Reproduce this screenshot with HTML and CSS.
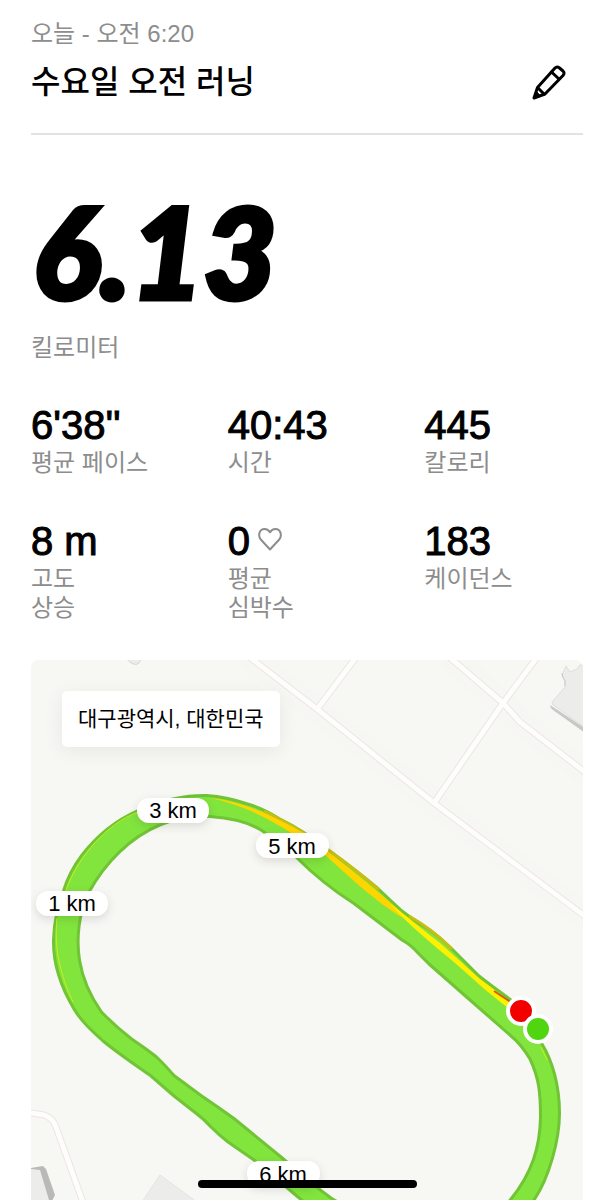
FILE: index.html
```html
<!DOCTYPE html>
<html lang="ko">
<head>
  <meta charset="UTF-8" />
  <meta name="viewport" content="width=device-width, initial-scale=1.0">
  <title>수요일 오전 러닝</title>
  <link rel="stylesheet" href="styles.css">
</head>
<body>

  <main class="page">
    <header class="header">
      <div class="date">오늘 - 오전 6:20</div>
      <div class="title-row">
        <h1 class="title">수요일 오전 러닝</h1>
        <button class="edit" type="button" aria-label="이름 편집">
          <svg width="36" height="36" viewBox="0 0 36 36" fill="none" stroke="#000" stroke-width="3" stroke-linejoin="round" stroke-linecap="round">
            <path d="M3 34 L6.500 23.500 L24 4 Q26 2 28.500 4 L32 7 Q34 9 32 11.500 L14 30 Z" />
            <path d="M20.500 8 L28 15 M7 24 L13 30" />
            <path d="M3 34 L5 27 L9.500 32 Z" fill="#000" stroke-width="1" />
          </svg>
        </button>
      </div>
    </header>

    <section class="distance">
      <div class="distance-value">6.13</div>
      <div class="label">킬로미터</div>
    </section>

    <section class="stats">
      <div class="stat">
        <div class="value">6'38''</div>
        <div class="label">평균 페이스</div>
      </div>
      <div class="stat">
        <div class="value">40:43</div>
        <div class="label">시간</div>
      </div>
      <div class="stat">
        <div class="value">445</div>
        <div class="label">칼로리</div>
      </div>
      <div class="stat">
        <div class="value">8 m</div>
        <div class="label">고도<br>상승</div>
      </div>
      <div class="stat">
        <div class="value">0
          <svg class="heart" width="24" height="28" viewBox="0 0 24 28" fill="none" stroke="#8d8d8d" stroke-width="2" stroke-linejoin="round">
            <path d="M12 22.500 L3 12.800 C-0.500 8.800 1.300 2 6.500 2 C9.500 2 11.300 4 12 5.300 C12.700 4 14.500 2 17.500 2 C22.700 2 24.500 8.800 21 12.800 Z" />
          </svg>
        </div>
        <div class="label">평균<br>심박수</div>
      </div>
      <div class="stat">
        <div class="value">183</div>
        <div class="label">케이던스</div>
      </div>
    </section>

    <section class="map">
      <svg class="map-canvas" viewBox="31 660 552 540" role="img" aria-label="러닝 경로">
        <!-- roads: edge first, then surface -->
        <g class="road-shade">
          <path d="M248 656 L434 803 L590 920" />
          <path d="M448 656 L503 703 L520 722 L590 776" />
        </g>
        <g class="road-edge">
          <path d="M248 656 L317 709 L434 803 L590 920" />
          <path d="M357 656 L318 708" />
          <path d="M448 656 L503 703 L520 722 L590 776" />
          <path d="M538 656 L503 703 L434 803" />
          <path d="M25 1112 L44 1115 Q53 1118 56 1127 L84 1205" />
        </g>
        <g class="road">
          <path d="M248 656 L317 709 L434 803 L590 920" />
          <path d="M357 656 L318 708" />
          <path d="M448 656 L503 703 L520 722 L590 776" />
          <path d="M538 656 L503 703 L434 803" />
          <path d="M25 1112 L44 1115 Q53 1118 56 1127 L84 1205" />
        </g>

        <!-- buildings -->
        <path fill="#c8c8c6" d="M550 705 Q550 708 553 710 L585 733 V728 Z" />
        <path fill="#ececeb" stroke="#dedede" d="M566 666 L570 672 L577 669 L580 665 H590 V731 L553 705 Q551 703 553 701 L565 687 V681 L562 675 Z" />
        <path fill="none" stroke="#c8c8c6" d="M562 673 Q562 677 565 681 V686" />
        <path fill="#ececeb" stroke="#d6d6d4" d="M126 658 Q132 666 138 664 L142 658 Z" />
        <path fill="#b9b9b7" d="M31 1168 L43 1166 L46 1169 L55 1195 L50 1205 H31 Z" />
        <path fill="#ececeb" d="M31 1169 L40 1170 L49 1200 H31 Z" />
        <path fill="#ececeb" stroke="#e4e4e2" d="M140 1205 L160 1175 L201 1205 Z" />

        <!-- track -->
        <path class="track" fill-rule="evenodd" d="M207 795.500
          C186 795 160 800 138 810.500 C114 821 95 838 82 855 C73 867 67 879 63.500 891
          C57 907 54 923 53.500 940 C53 965 62 989 74 1009
          C81 1021 92 1031 103 1041 C119 1054 134 1064 151 1076
          L174 1096 L197 1114 Q205 1120 211 1127 Q219 1135 228 1142 L254 1160 L298 1197
          L350 1240 C420 1280 505 1250 534 1200 C549 1178 559.500 1140 559.500 1113
          C559.500 1085 552 1060 542 1044 L530 1020 Q520 1006 509 998.500
          Q493 987 479 976 Q466 963 452 949 Q441 938 429 929.500 Q414 921 402 911
          Q390 900 379 889.500 Q356 870 329 850.500 Q303 830 279 818.500
          Q263 808 246 803.500 Q227 797 207 795.500 Z
          M210 816.500 C231 818 250 822 264 832 L296 857 Q323 884 354 903.500
          L402 940 Q411 945 418 953 L429 964 L470 1000 L511 1036 Q521 1044 530 1059
          C539 1078 540.500 1093 540.500 1117 C540 1147 532 1173 511 1199
          C480 1240 400 1240 331 1198 L315 1186 L281 1157 L234 1118.500
          Q218 1107 201 1095.500 L174 1075.500 Q164 1064 156 1056.500
          Q145 1048 131 1038.500 Q115 1026 101.500 1012 C93 1000 83 982 79.500 960
          C76 938 79 912 89 892 C105 863 130 837 161 824.500 Q184 815 210 816.500 Z" />
        <path class="pace-fine" d="M57 918 C53 953 64 983 73 1002 M66 890 C78 856 108 823 138 812" />
        <path class="pace-edge" d="M264 811 Q303 830 329 850.500 Q356 870 379 889.500 M409 916 Q432 929 452 949" />
        <path class="pace-slow" d="M210 798 C245 801 278 819 304 833 L330 853 L360 877 C376 890 390 902 416 925
          C392 913 371 896 354 881 L325 855 C295 836 262 809 210 798 Z" />
        <path class="pace-mid" d="M390 904 C410 918 420 928 440 943 L480 979 L511 1002 L508 1008 C487 992 472 978 455 963 C432 944 409 925 390 904 Z" />
        <path class="pace-stop" d="M494 991 L512 1003" />
        <path class="pace-fine" d="M541 1047 L547 1060" />

        <!-- kilometre pins -->
        <g class="pin">
          <rect x="137" y="798" width="72" height="25" rx="12" />
          <text x="173" y="818">3 km</text>
        </g>
        <g class="pin">
          <rect x="256" y="833" width="73" height="25" rx="12" />
          <text x="292" y="854">5 km</text>
        </g>
        <g class="pin">
          <rect x="36" y="891" width="72" height="25" rx="12" />
          <text x="72" y="911">1 km</text>
        </g>
        <g class="pin">
          <rect x="247" y="1161" width="73" height="25" rx="12" />
          <text x="283" y="1182">6 km</text>
        </g>

        <!-- finish and start -->
        <circle class="finish" cx="521" cy="1011" r="13" />
        <circle class="start" cx="538" cy="1029" r="13" />
      </svg>
      <div class="place">대구광역시, 대한민국</div>
    </section>
  </main>

  <div class="home-bar"></div>

</body>
</html>
```

FILE: styles.css
```css
* { box-sizing: border-box; }
body {
  font-family: "Liberation Sans", "Noto Sans CJK KR", sans-serif;
  margin: 0; background-color: #fff; color: #000;
}
.page { padding: 20px 31px 0; }

.header { border-bottom: 2px solid #e2e2e2; padding-bottom: 31px; }
.date { font-size: 24px; line-height: 28px; color: #8d8d8d; }
.title-row {
  display: flex; justify-content: space-between; align-items: center;
  margin-top: 14px; padding-right: 16px;
}
.title { font-size: 32px; line-height: 40px; font-weight: 500; margin: 0; }
.edit { background: none; border: none; padding: 0; cursor: pointer; height: 36px; }
.edit svg { display: block; }

.distance { padding-top: 46px; }
.distance-value {
  font-family: Lato, sans-serif; font-size: 126px; line-height: 140px; padding-left: 2px;
  font-weight: 900; font-style: italic; -webkit-text-stroke: 5px #000;
}
.distance .label { margin-top: 12px; }
.label { font-size: 24px; line-height: 29px; color: #8d8d8d; }

.stats {
  display: grid; grid-template-columns: repeat(3, 1fr);
  column-gap: 38px; row-gap: 41px; margin-top: 40px;
}
.value {
  display: flex; align-items: center; gap: 8px;
  font-size: 40px; line-height: 46px; -webkit-text-stroke: 1px #000;
}
.heart { flex: none; }

.map {
  position: relative; margin-top: 38px; overflow: hidden;
  background-color: #f7f8f3; border-radius: 8px 8px 0 0;
}
.map-canvas { display: block; width: 100%; height: auto; }
.place {
  position: absolute; top: 31px; left: 31px;
  background-color: #fff; border-radius: 5px; padding: 13px 16px;
  font-size: 21px; line-height: 30px;
  box-shadow: 0 4px 20px rgba(0, 0, 0, 0.07);
}

.road-shade, .road-edge, .road { fill: none; stroke-linejoin: round; }
.road-shade { stroke: #f6f6f3; stroke-width: 26px; }
.road-edge { stroke: #ebe6e3; stroke-width: 7px; }
.road { stroke: #fefdfb; stroke-width: 5px; }

.track { fill: #82e53e; stroke: #70c435; stroke-width: 3px; stroke-linejoin: round; }
.pace-fine { fill: none; stroke: #c9ef1c; stroke-width: 1px; }
.pace-edge { fill: none; stroke: #c8bd12; stroke-width: 3px; }
.pace-slow { fill: #ffd500; }
.pace-mid { fill: #fff000; }
.pace-stop { stroke: #d25a12; stroke-width: 2px; }

.pin rect { fill: #fff; filter: drop-shadow(0 3px 5px rgba(0, 0, 0, 0.12)); }
.pin text { font-size: 22px; text-anchor: middle; fill: #000; }
.finish, .start { stroke: #fff; stroke-width: 4px; }
.finish { fill: #f20000; }
.start { fill: #50d611; }

.home-bar {
  position: fixed; left: 50%; bottom: 12px; width: 219px; height: 8px;
  margin-left: -109px; border-radius: 4px; background-color: #000;
}
```
